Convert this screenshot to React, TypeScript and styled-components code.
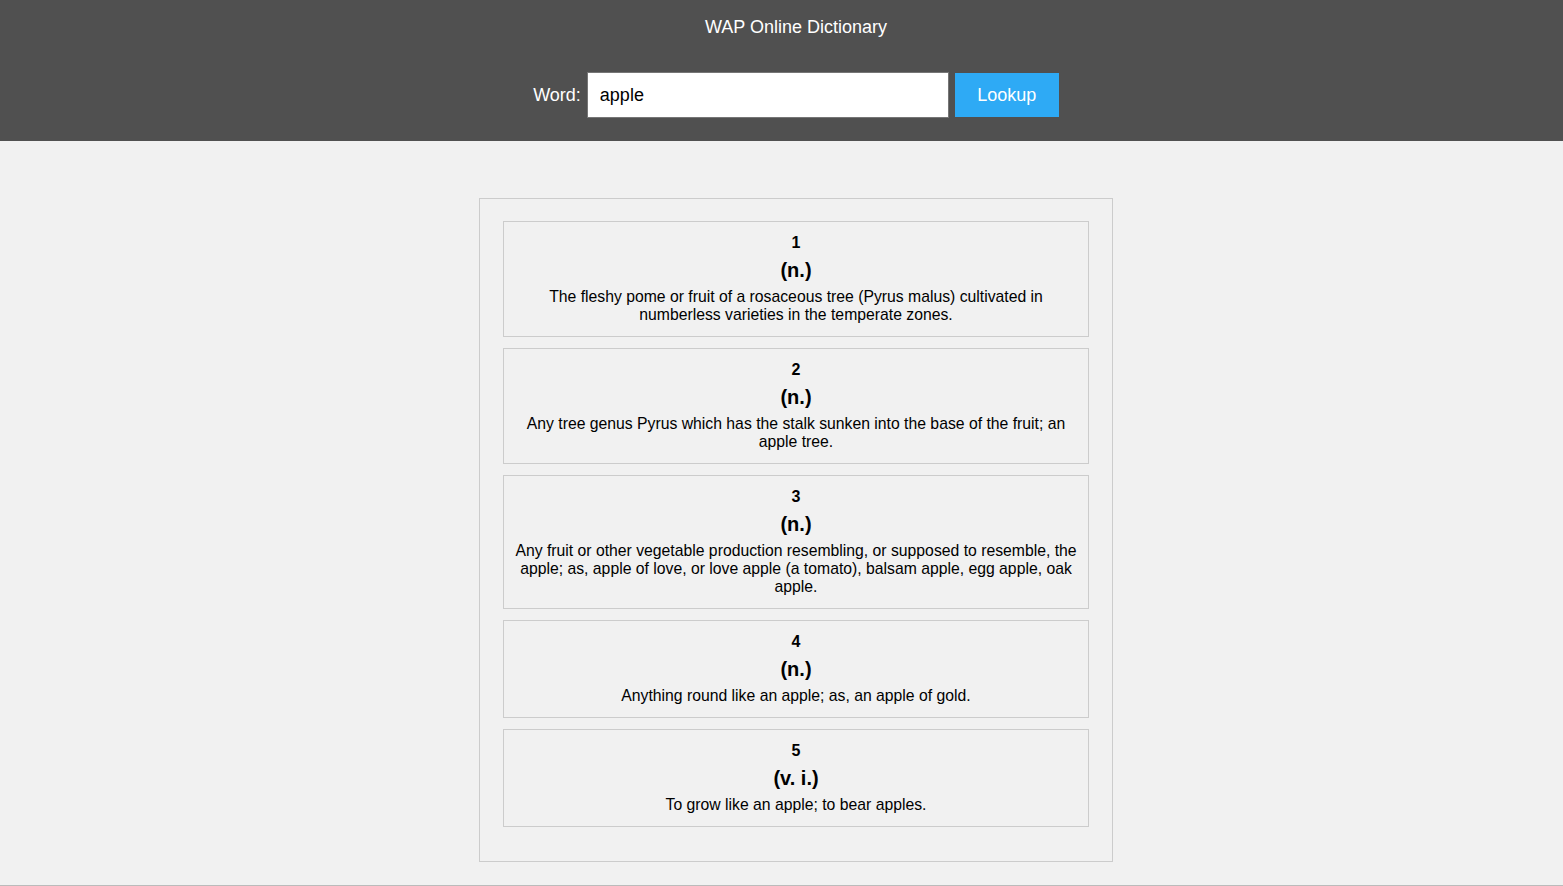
import React from "react";
import styled, { createGlobalStyle } from "styled-components";

const GlobalStyle = createGlobalStyle`
  body {
    margin: 0;
    background: #f1f1f1;
    font-family: "Liberation Sans", Arial, sans-serif;
  }
`;

interface Definition {
    type: string;
    text: string;
}

const definitions: Definition[] = [
    {
        type: "(n.)",
        text: "The fleshy pome or fruit of a rosaceous tree (Pyrus malus) cultivated in numberless varieties in the temperate zones.",
    },
    {
        type: "(n.)",
        text: "Any tree genus Pyrus which has the stalk sunken into the base of the fruit; an apple tree.",
    },
    {
        type: "(n.)",
        text: "Any fruit or other vegetable production resembling, or supposed to resemble, the apple; as, apple of love, or love apple (a tomato), balsam apple, egg apple, oak apple.",
    },
    {
        type: "(n.)",
        text: "Anything round like an apple; as, an apple of gold.",
    },
    {
        type: "(v. i.)",
        text: "To grow like an apple; to bear apples.",
    },
];

const App: React.FC = () => {
    return (
        <Page>
            <GlobalStyle />
            <Header>
                <Title>WAP Online Dictionary</Title>
                <SearchForm onSubmit={e => e.preventDefault()}>
                    <Label htmlFor="word">Word:</Label>
                    <WordInput id="word" defaultValue="apple" />
                    <LookupButton type="submit">Lookup</LookupButton>
                </SearchForm>
            </Header>
            <Main>
                <Results>
                    {definitions.map((d, i) => (
                        <Card key={i}>
                            <Number>{i + 1}</Number>
                            <WordType>{d.type}</WordType>
                            <Meaning>{d.text}</Meaning>
                        </Card>
                    ))}
                </Results>
            </Main>
            <Footer />
        </Page>
    );
};

const Page = styled.div`
  min-height: 886px;
  display: flex;
  flex-direction: column;
`;

// the original page is centred a little right of the window centre
const Header = styled.header`
  background: #505050;
  height: 141px;
  box-sizing: border-box;
  padding: 15px 0 0 29px;
  display: flex;
  flex-direction: column;
  align-items: center;
`;

const Title = styled.div`
  color: #fff;
  font-size: 18px;
  line-height: 24px;
`;

const SearchForm = styled.form`
  margin-top: 33px;
  display: flex;
  align-items: center;
`;

const Label = styled.label`
  color: #fff;
  font-size: 18px;
  margin-right: 6px;
`;

const WordInput = styled.input`
  width: 362px;
  height: 46px;
  box-sizing: border-box;
  border: 1px solid #767676;
  padding: 0 12px;
  font-family: inherit;
  font-size: 18px;
  color: #000;
  outline: none;
`;

const LookupButton = styled.button`
  margin-left: 6px;
  width: 104px;
  height: 44px;
  border: none;
  background: #2eaaf5;
  color: #fff;
  font-family: inherit;
  font-size: 18px;
  cursor: pointer;
`;

const Main = styled.main`
  flex: 1;
  display: flex;
  justify-content: center;
  padding: 57px 0 0 29px;
`;

const Results = styled.section`
  width: 634px;
  height: 664px;
  box-sizing: border-box;
  border: 1px solid #cccccc;
  padding: 22px 23px;
  display: flex;
  flex-direction: column;
  gap: 11px;
`;

const Card = styled.article`
  border: 1px solid #cccccc;
  padding: 10px 8px 12px;
  text-align: center;
  color: #000;
  display: flex;
  flex-direction: column;
  align-items: center;
`;

const Number = styled.div`
  font-weight: bold;
  font-size: 16px;
  line-height: 22px;
`;

const WordType = styled.div`
  font-weight: bold;
  font-size: 20px;
  line-height: 24px;
  margin-top: 4px;
`;

const Meaning = styled.p`
  margin: 6px 0 0;
  font-size: 15.75px;
  line-height: 18px;
`;

const Footer = styled.footer`
  height: 1px;
  background: #bbbbbb;
  margin-top: auto;
`;

export default App;
